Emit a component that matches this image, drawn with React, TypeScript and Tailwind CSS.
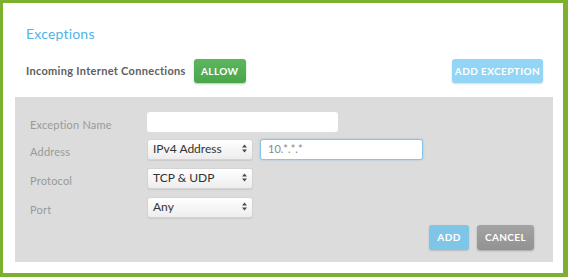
import React from "react";

const font = { fontFamily: "Lato, 'Open Sans', 'Liberation Sans', sans-serif" };

function Arrows() {
  return (
    <svg width="5" height="9" viewBox="0 0 5 9" className="flex-none">
      <path d="M2.5 0.5 L5 3.5 H0 Z" fill="#4a4a4a" />
      <path d="M2.5 8.5 L5 5.5 H0 Z" fill="#4a4a4a" />
    </svg>
  );
}

function Select({ value }: { value: string }) {
  return (
    <div className="flex h-[21px] w-[106px] items-center justify-between rounded-[3px] border border-[#d4d4d4] bg-gradient-to-b from-white to-[#ededed] pb-[2px] pl-[5px] pr-[5px] text-[12px] text-[#333] shadow-[0_1px_1px_rgba(0,0,0,0.08)]">
      <span>{value}</span>
      <Arrows />
    </div>
  );
}

function Row({ label, children, h = "h-[21px]" }: { label: string; children: React.ReactNode; h?: string }) {
  return (
    <div className={`flex items-center ${h}`}>
      <span className="w-[117px] flex-none pt-[6px] text-[11px] tracking-[0.2px] text-[#999]">{label}</span>
      <div className="flex items-center gap-[7px]">{children}</div>
    </div>
  );
}

export default function App() {
  return (
    <div
      style={font}
      className="flex h-[277px] w-[568px] flex-col border-t-[3px] border-r-[5px] border-b-[4px] border-l-[3px] border-[#7bb12f] bg-white"
    >
      <h1 className="pt-[23px] pl-[23px] text-[14px] leading-[16px] tracking-[0.2px] text-[#4fb4e8]">Exceptions</h1>

      <div className="mt-[17px] flex h-[24px] items-center pr-[20px] pl-[23px]">
        <span className="text-[11px] font-bold tracking-[0.3px] text-[#5e5e5e]">Incoming Internet Connections</span>
        <button className="ml-[8px] h-[24px] w-[52px] rounded-[3px] bg-gradient-to-b from-[#5db65d] to-[#4aa64a] text-[10px] font-bold tracking-[0.4px] text-white shadow-[0_1px_2px_rgba(0,0,0,0.25)]">
          ALLOW
        </button>
        <button className="ml-auto h-[24px] w-[91px] rounded-[3px] bg-[#93d5f6] text-[10px] font-bold tracking-[0.4px] text-white shadow-[0_1px_2px_rgba(0,0,0,0.15)]">
          ADD EXCEPTION
        </button>
      </div>

      <div className="mt-[14px] mr-[10px] ml-[12px] flex h-[165px] flex-col bg-[#dcdcdc] pt-[15px] pr-[19px] pl-[15px]">
        <Row label="Exception Name" h="h-[20px]">
          <div className="h-[20px] w-[191px] rounded-[3px] bg-white" />
        </Row>
        <div className="mt-[7px]">
          <Row label="Address">
            <Select value="IPv4 Address" />
            <div className="flex h-[21px] w-[163px] items-center rounded-[3px] border border-[#88c3ea] bg-white pl-[7px] text-[11px] text-[#888] shadow-[0_0_2px_rgba(80,160,230,0.5)]">
              10.*.*.*
            </div>
          </Row>
        </div>
        <div className="mt-[8px]">
          <Row label="Protocol">
            <Select value="TCP & UDP" />
          </Row>
        </div>
        <div className="mt-[8px]">
          <Row label="Port">
            <Select value="Any" />
          </Row>
        </div>
        <div className="mt-[7px] flex justify-end gap-[8px]">
          <button className="h-[25px] w-[40px] rounded-[3px] bg-[#7ec5e8] text-[10px] font-bold tracking-[0.4px] text-white shadow-[0_1px_2px_rgba(0,0,0,0.15)]">
            ADD
          </button>
          <button className="h-[25px] w-[57px] rounded-[3px] bg-gradient-to-b from-[#a3a3a3] to-[#929292] text-[10px] font-bold tracking-[0.4px] text-white shadow-[0_1px_2px_rgba(0,0,0,0.25)]">
            CANCEL
          </button>
        </div>
      </div>
    </div>
  );
}
